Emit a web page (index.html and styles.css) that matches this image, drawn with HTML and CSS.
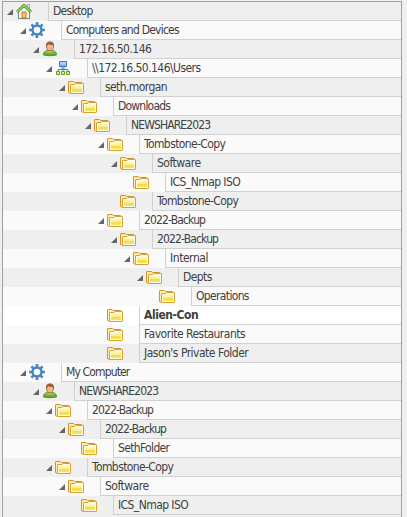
FILE: index.html
```
<!DOCTYPE html>
<html lang="en">
<head>
<meta charset="utf-8">
<title>Folders</title>
<link rel="stylesheet" href="styles.css">
</head>
<body>
<svg class="defs" aria-hidden="true">
  <defs>
    <linearGradient id="fold" x1="0" y1="0" x2="0" y2="1"><stop offset="0" stop-color="#fff8c0"/><stop offset=".45" stop-color="#faec90"/><stop offset=".5" stop-color="#f2da48"/><stop offset="1" stop-color="#f6e468"/></linearGradient>
    <linearGradient id="green" x1="0" y1="0" x2="0" y2="1"><stop offset="0" stop-color="#a8d45c"/><stop offset="1" stop-color="#4f9a1c"/></linearGradient>
    <linearGradient id="blue" x1="0" y1="0" x2="0" y2="1"><stop offset="0" stop-color="#c4e4fa"/><stop offset="1" stop-color="#6cb0e8"/></linearGradient>
  </defs>
  <symbol id="folder" viewBox="0 0 16 16">
    <path d="M.5 13.500V3q0-.5.500-.5h4.500l1 1H13.500q.5 0 .5.500V5" fill="#fdeeb0" stroke="#d3922c"/>
    <path d="M.5 13.500 2.500 14.500" stroke="#d3922c"/>
    <path d="M2.500 14.500V6q0-.5.500-.5h4l1-1h7q.5 0 .5.500v9q0 .5-.5.500z" fill="#fffce0" stroke="#dba032"/>
    <path d="M4 7h10v6H4z" fill="url(#fold)"/>
  </symbol>
  <symbol id="home" viewBox="0 0 16 16">
    <path d="M11.500 1.500h2v5h-2z" fill="#eef2f5" stroke="#8498a8" stroke-width=".8"/>
    <path d="M2.500 8v7.500h11V8L8 3z" fill="#f6f8fb" stroke="#6e8292"/>
    <path d="M6 15V9h4v6z" fill="#ffc86e" stroke="#c46a1c"/>
    <path d="M1 9 8 2.400l7 6.600" fill="none" stroke="#4d9428" stroke-width="3" stroke-linejoin="round"/>
    <path d="M1 8.900 8 2.300l7 6.600" fill="none" stroke="#a5db66" stroke-width="1.300"/>
  </symbol>
  <symbol id="gear" viewBox="0 0 16 16">
    <circle cx="8" cy="8" r="4.500" fill="none" stroke="#4985c0" stroke-width="2.400"/>
    <g stroke="#4985c0" stroke-width="2.600"><path d="M8 .1v3M8 12.900v3M.1 8h3M12.900 8h3M2.400 2.400l2.200 2.200M11.400 11.400l2.200 2.200M2.400 13.600l2.200-2.200M11.400 4.600l2.200-2.200"/></g>
  </symbol>
  <symbol id="user" viewBox="0 0 16 16">
    <path d="M1.500 14q-.2-3.800 4-4.500h5q4.200.7 4 4.500-6.500 1.500-13 0z" fill="url(#green)" stroke="#4a8a20" stroke-width=".9"/>
    <path d="M6 9 8 12l2-3V8H6z" fill="#e8ad7c"/>
    <ellipse cx="8" cy="5.400" rx="3.400" ry="4.300" fill="#efb98c" stroke="#9b5c2e" stroke-width=".8"/>
    <path d="M4.200 6.500Q3 .5 8 .5t3.800 6L10.700 3.800Q8.500 4.300 6.500 3.300L5.200 4.500z" fill="#a05c2c"/>
  </symbol>
  <symbol id="network" viewBox="0 0 16 16">
    <path d="M8 8v5M3 12V9.500h10V12" fill="none" stroke="#6c7c8c"/>
    <path d="M4.500 1.500h7v5h-7z" fill="url(#blue)" stroke="#3c78b4"/>
    <path d="M6 8h4" stroke="#3c78b4"/>
    <path d="M1.500 11.500h3v3h-3zM6.500 11.500h3v3h-3zM11.500 11.500h3v3h-3z" fill="#d5f09c" stroke="#579b20"/>
  </symbol>
</svg>
<main class="tree" id="tree"></main>
<script src="tree.js"></script>
</body>
</html>
```
FILE: styles.css
```
body {
  margin: 0;
  background: #efefef;
  font-family: "DejaVu Sans Condensed", "DejaVu Sans", sans-serif;
  font-stretch: condensed;
  font-size: 12px;
  color: #404040;
}
.defs { position: absolute; width: 0; height: 0; }
.tree {
  box-sizing: border-box;
  width: 400px;
  height: 516px;
  margin: 1px 0 0 2px;
  border: solid #a0a0a0;
  border-width: 1px 1px 0;
  overflow: hidden;
}
.row {
  display: flex;
  height: 19px;
  background: #efefef;
  padding-left: calc(var(--level) * 13px);
}
.row:nth-child(even) { background: #fafafa; }
.row.selected { background: #fff; font-weight: bold; }
.handle {
  display: flex;
  flex: none;
  width: 45px;
}
.arrow { width: 6px; height: 6px; margin: 7px 2px 0 4px; fill: #666; }
.arrow.leaf { visibility: hidden; }
.icon { width: 16px; height: 16px; margin: 1px 0 0 1px; }
.label {
  flex: 1;
  box-sizing: border-box;
  border-left: 1px solid #d0d0d0;
  border-bottom: 1px solid #d0d0d0;
  padding-left: 4px;
  line-height: 18px;
  white-space: pre;
  letter-spacing: calc(var(--tracking) * 1px);
}
```
FILE: tree.js
```
// level, icon, name, expanded, letter spacing, state
const rows = [
  [0, "home", "Desktop", 1, -0.7],
  [1, "gear", "Computers and Devices", 1, -0.77],
  [2, "user", "172.16.50.146", 1, -0.5],
  [3, "network", "\\\\172.16.50.146\\Users", 1, -0.55],
  [4, "folder", "seth.morgan", 1, -0.58],
  [5, "folder", "Downloads", 1, -0.8],
  [6, "folder", "NEWSHARE2023", 1, -0.87],
  [7, "folder", "Tombstone-Copy", 1, -0.6],
  [8, "folder", "Software", 1, -0.5],
  [9, "folder", "ICS_Nmap ISO", 0, -0.57],
  [8, "folder", "Tombstone-Copy", 0, -0.6],
  [7, "folder", "2022-Backup", 1, -0.85],
  [8, "folder", "2022-Backup", 1, -0.85],
  [9, "folder", "Internal", 1, -0.45],
  [10, "folder", "Depts", 1, -0.6],
  [11, "folder", "Operations", 0, -0.65],
  [7, "folder", "Alien-Con", 0, -0.45, "selected"],
  [7, "folder", "Favorite Restaurants", 0, -0.5],
  [7, "folder", "Jason's Private Folder", 0, -0.5],
  [1, "gear", "My Computer", 1, -0.85],
  [2, "user", "NEWSHARE2023", 1, -0.87],
  [3, "folder", "2022-Backup", 1, -0.85],
  [4, "folder", "2022-Backup", 1, -0.85],
  [5, "folder", "SethFolder", 0, -0.65],
  [3, "folder", "Tombstone-Copy", 1, -0.6],
  [4, "folder", "Software", 1, -0.5],
  [5, "folder", "ICS_Nmap ISO", 0, -0.57]
];
document.getElementById("tree").innerHTML = rows.map(([level, icon, name, open, tracking, state = ""]) => `
  <div class="row ${state}" style="--level:${level};--tracking:${tracking}">
    <div class="handle">
      <svg class="arrow ${open ? "" : "leaf"}" viewBox="0 0 6 6"><path d="M6 0v6H0z"/></svg>
      <svg class="icon"><use href="#${icon}"/></svg>
    </div>
    <div class="label">${name}</div>
  </div>`).join("");
```
